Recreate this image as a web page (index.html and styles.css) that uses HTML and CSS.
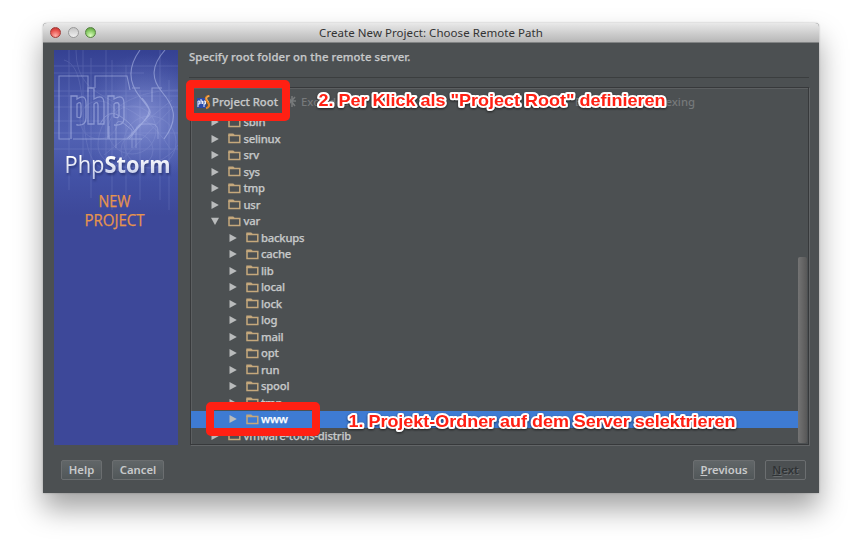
FILE: index.html
```html
<!DOCTYPE html>
<html lang="en">
<head>
<meta charset="utf-8">
<title>Create New Project: Choose Remote Path</title>
<link rel="stylesheet" href="styles.css">
</head>
<body>
<svg class="defs" width="0" height="0" aria-hidden="true">
  <symbol id="folder" viewBox="0 0 13 11"><path d="M1 2.6h10.8v7H1z" fill="none" stroke="#c5a87c" stroke-width="1.5"/><path d="M.3 3V.4h5L6.700 2v1z" fill="#c5a87c"/></symbol>
  <symbol id="closed" viewBox="0 0 8 8"><path d="M.5 0L7.800 4 .5 8z" fill="#b9bbbc"/></symbol>
  <symbol id="open" viewBox="0 0 8 8"><path d="M0 .7h8L4 7.900z" fill="#b9bbbc"/></symbol>
</svg>
<div class="window">
  <header class="titlebar">
    <div class="lights"><i class="light red"></i><i class="light gray"></i><i class="light green"></i></div>
    <span class="title">Create New Project: Choose Remote Path</span>
  </header>
  <main class="content">
    <aside class="banner">
      <svg viewBox="0 0 124 395" width="124" height="395">
        <defs>
          <linearGradient id="base" x1="0" y1="0" x2="0" y2="1"><stop offset="0" stop-color="#354192"/><stop offset=".12" stop-color="#4857a9"/><stop offset=".22" stop-color="#5161b2"/><stop offset=".32" stop-color="#4352a6"/><stop offset=".42" stop-color="#3d4899"/><stop offset="1" stop-color="#3d4899"/></linearGradient>
          <radialGradient id="glow" gradientUnits="userSpaceOnUse" cx="90" cy="68" r="64"><stop offset="0" stop-color="#a0aae4" stop-opacity=".65"/><stop offset="1" stop-color="#7080c8" stop-opacity="0"/></radialGradient>
          <linearGradient id="silver" x1="0" y1="0" x2="0" y2="1"><stop offset=".3" stop-color="#fff"/><stop offset="1" stop-color="#b8c0e4"/></linearGradient>
        </defs>
        <path fill="url(#base)" d="M0 0h124v395H0z"/>
        <path fill="url(#glow)" d="M0 0h124v150H0z"/>
        <g fill="none" stroke="#b7c1ed" stroke-width=".8" opacity=".2">
          <path d="M0 16h124M0 23h90M0 41h124M0 46h124M0 57h124M0 71h50M0 83h124M0 99h124M15 0v140M29 0v120M37 8v140M52 0v110M58 10v150M72 15v130M86 40v110M106 0v150M115 30v130"/>
          <path d="M10 10C45 20 10 130 65 120M22 0c0 60 60 40 95 100M50 105l68-55M60 118l60-62M124 40c-50 0-80 25-80 55s60 30 80 0"/>
          <circle cx="78" cy="80" r="24"/><circle cx="96" cy="92" r="26"/><circle cx="45" cy="70" r="19"/><circle cx="83" cy="100" r="16"/>
        </g>
        <g fill="none" stroke="#bdc7f0" stroke-width="1.100" opacity=".5">
          <path d="M34 42V26H5v63h11M41 38V26h32l3 14M19 89h36M55 76v13h33M78 38h8M98 52V38h10"/>
          <g stroke-width="1.300">
            <path d="M17 89V46h6v3q9-6 9 5v14q0 8-9 7v-1M23 54v13q4 2 4-2V55q0-4-4-1z"/>
            <path d="M34 74V38h6v11q10-6 10 5v20h-6V55q0-4-4-1v20z"/>
            <path d="M54 89V46h6v3q10-6 10 5v14q0 8-10 7M60 54v13q5 2 5-2V55q0-4-5-1z"/>
          </g>
          <path d="M86 0C75 15 73 31 86 47s14 15 0 28L73 89M88 48c8 9 10 13 2 23L75 89M111 0c-14 16-14 29-3 42s18 26 2 47"/>
          <path d="M62 98V76q0-6 6-4l10 8v18M82 98V80q0-6 8-6h8q6 0 6 8v7M46 74q8-16 20-8t14 14" stroke-width=".8"/>
        </g>
        <g class="logo"><text x="10.500" y="122.500" textLength="40" lengthAdjust="spacingAndGlyphs">Php</text><text x="50.500" y="122.500" textLength="66" lengthAdjust="spacingAndGlyphs" font-weight="700">Storm</text></g>
        <g class="step"><text x="44.500" y="157" textLength="32" lengthAdjust="spacingAndGlyphs">NEW</text><text x="30.500" y="175.500" textLength="60" lengthAdjust="spacingAndGlyphs">PROJECT</text></g>
      </svg>
    </aside>
    <section class="pane">
      <p class="hint">Specify root folder on the remote server.</p>
      <div class="browser">
        <div class="toolbar">
          <svg class="php" width="14" height="15" viewBox="0 0 14 15"><path d="M0 3h9v10H0z" fill="#2949aa"/><path d="M1 12V6h1.700v3H1M4 4v5M4 6h1.500v3M7 12V6h1.500v3H7" fill="none" stroke="#fff" stroke-width=".9"/><path d="M12.500.8C7 2 9 5 11 7.500s1 5-2 5.700" fill="none" stroke="#e28329" stroke-width="2.200"/><path d="M12 1c-4 1-2 4 0 6" fill="none" stroke="#ffd276" stroke-width=".7"/></svg>
          <span class="tool">Project Root</span>
          <svg class="exicon" width="10" height="12" viewBox="0 0 10 12"><path d="M1 1l7 9M8 1L1 9M5 0v11M0 5h9" stroke="#777a7b" stroke-width="1.500"/></svg>
          <span class="disabled">Excluded</span>
          <span class="disabled tail">Exclude from indexing</span>
        </div>
        <div class="tree">
          <div class="row"><svg class="arrow"><use href="#closed"/></svg><svg class="folder"><use href="#folder"/></svg><span>sbin</span></div>
          <div class="row"><svg class="arrow"><use href="#closed"/></svg><svg class="folder"><use href="#folder"/></svg><span>selinux</span></div>
          <div class="row"><svg class="arrow"><use href="#closed"/></svg><svg class="folder"><use href="#folder"/></svg><span>srv</span></div>
          <div class="row"><svg class="arrow"><use href="#closed"/></svg><svg class="folder"><use href="#folder"/></svg><span>sys</span></div>
          <div class="row"><svg class="arrow"><use href="#closed"/></svg><svg class="folder"><use href="#folder"/></svg><span>tmp</span></div>
          <div class="row"><svg class="arrow"><use href="#closed"/></svg><svg class="folder"><use href="#folder"/></svg><span>usr</span></div>
          <div class="row"><svg class="arrow"><use href="#open"/></svg><svg class="folder"><use href="#folder"/></svg><span>var</span></div>
          <div class="row child"><svg class="arrow"><use href="#closed"/></svg><svg class="folder"><use href="#folder"/></svg><span>backups</span></div>
          <div class="row child"><svg class="arrow"><use href="#closed"/></svg><svg class="folder"><use href="#folder"/></svg><span>cache</span></div>
          <div class="row child"><svg class="arrow"><use href="#closed"/></svg><svg class="folder"><use href="#folder"/></svg><span>lib</span></div>
          <div class="row child"><svg class="arrow"><use href="#closed"/></svg><svg class="folder"><use href="#folder"/></svg><span>local</span></div>
          <div class="row child"><svg class="arrow"><use href="#closed"/></svg><svg class="folder"><use href="#folder"/></svg><span>lock</span></div>
          <div class="row child"><svg class="arrow"><use href="#closed"/></svg><svg class="folder"><use href="#folder"/></svg><span>log</span></div>
          <div class="row child"><svg class="arrow"><use href="#closed"/></svg><svg class="folder"><use href="#folder"/></svg><span>mail</span></div>
          <div class="row child"><svg class="arrow"><use href="#closed"/></svg><svg class="folder"><use href="#folder"/></svg><span>opt</span></div>
          <div class="row child"><svg class="arrow"><use href="#closed"/></svg><svg class="folder"><use href="#folder"/></svg><span>run</span></div>
          <div class="row child"><svg class="arrow"><use href="#closed"/></svg><svg class="folder"><use href="#folder"/></svg><span>spool</span></div>
          <div class="row child"><svg class="arrow"><use href="#closed"/></svg><svg class="folder"><use href="#folder"/></svg><span>tmp</span></div>
          <div class="row child selected"><svg class="arrow"><use href="#closed"/></svg><svg class="folder"><use href="#folder"/></svg><span>www</span></div>
          <div class="row"><svg class="arrow"><use href="#closed"/></svg><svg class="folder"><use href="#folder"/></svg><span>vmware-tools-distrib</span></div>
        </div>
        <div class="scrollbar"></div>
      </div>
    </section>
  </main>
  <footer class="actions">
    <button class="btn help">Help</button><button class="btn cancel">Cancel</button>
    <button class="btn previous"><u>P</u>revious</button><button class="btn next" disabled><u>N</u>ext</button>
  </footer>
</div>
<svg class="annotations" width="862" height="555" viewBox="0 0 862 555">
  <rect x="190" y="84" width="96" height="33" rx="1"/>
  <rect x="210" y="406" width="106" height="26" rx="1"/>
  <text x="318.500" y="106" textLength="347" lengthAdjust="spacingAndGlyphs">2. Per Klick als "Project Root" definieren</text>
  <text x="348.500" y="427" textLength="387" lengthAdjust="spacingAndGlyphs">1. Projekt-Ordner auf dem Server selektrieren</text>
</svg>
</body>
</html>
```
FILE: styles.css
```css
* { box-sizing: border-box; }
body {
  margin: 0;
  width: 862px;
  height: 555px;
  overflow: hidden;
  padding: 23px 43px;
  background: #fff;
  font: 500 11.3px/14px "Noto Sans", "Open Sans", sans-serif;
  color: #c6c8c9;
}
.defs { position: absolute; }
.window {
  width: 776px;
  height: 470px;
  display: flex;
  flex-direction: column;
  background: #4c5052;
  border-radius: 4px 4px 0 0;
  box-shadow: 0 16px 28px rgba(0, 0, 0, .36), 0 0 2px rgba(0, 0, 0, .3);
}
.titlebar {
  height: 20px;
  flex: none;
  display: grid;
  grid-template-columns: 60px 1fr 60px;
  align-items: center;
  background: linear-gradient(#e9e9e9, #b7b7b7);
  border-bottom: 1px solid #818384;
  border-radius: 4px 4px 0 0;
  color: #333;
}
.title { text-align: center; white-space: nowrap; letter-spacing: .05px; font-size: 11.5px; font-weight: 400; padding-top: 1px; }
.lights { display: flex; gap: 6.500px; padding-left: 7px; }
.light { width: 11px; height: 11px; border-radius: 50%; border: 1px solid #888; }
.red { background: radial-gradient(circle at 50% 85%, #ffb0a8, #e8524d 60%, #b52f2d); border-color: #a23c39; }
.gray { background: linear-gradient(#c5c5c5, #f0f0f0); border-color: #999; }
.green { background: radial-gradient(circle at 50% 85%, #ddffc0, #83c860 60%, #578e3c); border-color: #568341; }
.content { display: flex; gap: 11px; padding: 7px 10px 0 11px; height: 403px; flex: none; }
.banner { width: 124px; height: 395px; flex: none; }
.banner svg { display: block; }
.logo { font: 400 23px "Open Sans", sans-serif; fill: url(#silver); filter: drop-shadow(1px 2px 1px rgba(25, 35, 90, .6)); }
.step { font: 400 15.500px "Open Sans", sans-serif; fill: #e6944d; stroke: #e6944d; stroke-width: .25px; }
.pane { flex: 1; min-width: 0; }
.hint { margin: 0; height: 28px; border-bottom: 1px solid #3b3e3f; letter-spacing: .1px; white-space: nowrap; -webkit-text-stroke: .25px; }
.browser {
  position: relative;
  margin: 9px 0 0 1px;
  height: 358px;
  border: 1px solid #37393b;
  box-shadow: inset 1px 1px #5c5f61, 1px 1px #626567;
  overflow: hidden;
}
.toolbar { display: flex; height: 26px; align-items: center; padding: 2px 0 0 6px; white-space: nowrap; }
.php { margin-right: 1px; }
.tool { width: 66px; -webkit-text-stroke: .25px; }
.exicon { margin: 0 4px 0 9px; }
.disabled { color: #76797b; }
.tail { margin-left: auto; margin-right: 113px; }
.tree { overflow: hidden; height: 330px; letter-spacing: -.22px; -webkit-text-stroke: .25px; }
.row { height: 16.500px; display: flex; align-items: center; padding-left: 20px; margin-right: 10px; white-space: nowrap; }
.child { padding-left: 37.500px; }
.selected { background: #3e7bd3; color: #fff; }
.arrow { width: 8px; height: 8px; margin-right: 9px; }
.folder { width: 13px; height: 11px; margin-right: 2.500px; }
.scrollbar { position: absolute; right: 1px; top: 169px; width: 9px; height: 186px; border-radius: 2px; background: linear-gradient(90deg, #747474, #585858); }
.actions { display: flex; height: 47px; flex: none; padding: 14px 13px 13px 18px; align-items: center; position: relative; }
.btn {
  height: 20px;
  padding: 0;
  font: inherit;
  font-weight: 600;
  color: #c8cacb;
  border: 1px solid #6b6e70;
  border-radius: 2px;
  background: linear-gradient(#616668, #515759);
}
.help { width: 41px; margin-right: 10px; }
.cancel { width: 52px; }
.previous { width: 62px; margin-left: auto; margin-right: 10px; }
.next { width: 41px; background: none; color: #303335; text-shadow: 1px 1px #686c6e; }
.annotations { position: absolute; left: 0; top: 0; font: 700 17px "Liberation Sans", sans-serif; }
.annotations rect { fill: none; stroke: #ff2013; stroke-width: 8; stroke-linejoin: round; }
.annotations text { fill: #ff2013; stroke: #fff; stroke-width: 4px; stroke-linejoin: round; paint-order: stroke; filter: drop-shadow(0 1px 1px rgba(0, 0, 0, .6)); }
```
